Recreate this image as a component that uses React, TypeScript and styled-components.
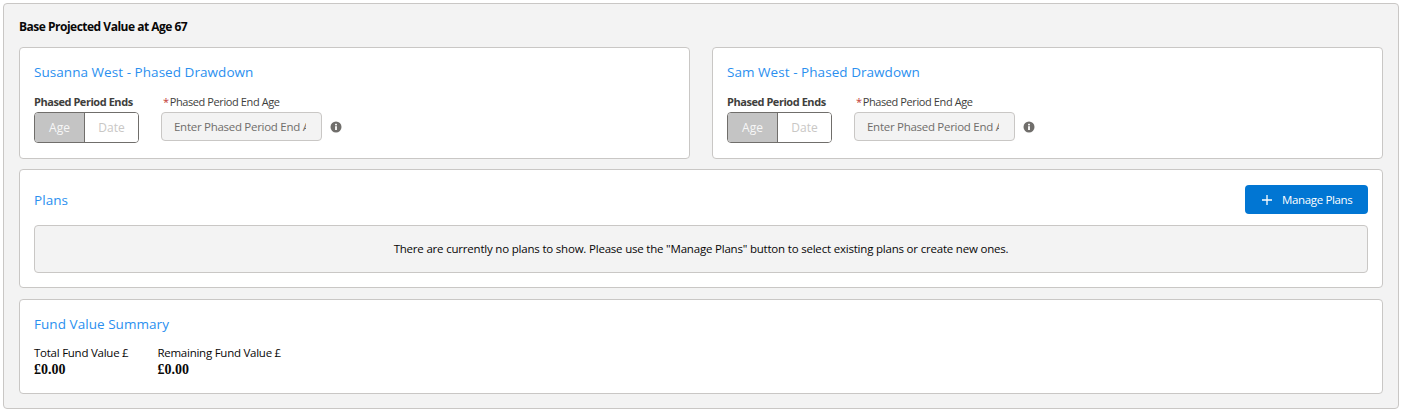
import React from 'react';
import styled, { createGlobalStyle } from 'styled-components';

const GlobalStyle = createGlobalStyle`
  html, body {
    margin: 0;
    padding: 0;
    background: #fff;
  }
  body {
    font-family: 'Open Sans', 'Noto Sans', sans-serif;
    font-size: 12px;
    color: #080707;
  }
`;

const Panel = styled.div`
  box-sizing: border-box;
  width: 1396px;
  height: 406px;
  margin: 3px 0 0 3px;
  padding: 14px 15px;
  background: #f3f3f3;
  border: 1px solid #c9c7c5;
  border-radius: 4px;
`;

const PanelTitle = styled.h2`
  margin: 0 0 11px;
  font-size: 12px;
  line-height: 18px;
  font-weight: 700;
  letter-spacing: -0.5px;
  color: #080707;
`;

const Columns = styled.div`
  display: grid;
  grid-template-columns: 671px 671px;
  gap: 22px;
  margin-bottom: 10px;
`;

const Card = styled.section<{ $height: number }>`
  box-sizing: border-box;
  height: ${(p) => p.$height}px;
  padding: 14px 14px 0;
  background: #fff;
  border: 1px solid #c9c7c5;
  border-radius: 4px;
`;

const Stack = styled.div`
  display: flex;
  flex-direction: column;
  gap: 11px;
`;

const CardTitle = styled.h3`
  margin: 0;
  font-size: 13.5px;
  line-height: 20px;
  font-weight: 400;
  letter-spacing: 0.05px;
  color: #2b8fef;
`;

const FieldRow = styled.div`
  display: flex;
  align-items: flex-start;
  margin-top: 11px;
`;

const ToggleField = styled.div`
  display: flex;
  flex-direction: column;
  width: 105px;
  margin-right: 22px;
`;

const BoldLabel = styled.span`
  font-size: 11px;
  line-height: 17px;
  padding-bottom: 2px;
  font-weight: 700;
  letter-spacing: -0.45px;
  color: #3e3e3c;
  white-space: nowrap;
`;

const Toggle = styled.div`
  display: flex;
  box-sizing: border-box;
  height: 31px;
  width: 105px;
  border: 1px solid #706e6b;
  border-radius: 4px;
  overflow: hidden;
`;

const ToggleOption = styled.div<{ $active?: boolean }>`
  display: flex;
  align-items: center;
  justify-content: center;
  box-sizing: border-box;
  width: ${(p) => (p.$active ? '50px' : '53px')};
  font-size: 12px;
  letter-spacing: 0;
  color: ${(p) => (p.$active ? '#f7f7f7' : '#c9c7c5')};
  background: ${(p) => (p.$active ? '#c4c4c4' : '#fff')};
  border-right: ${(p) => (p.$active ? '1px solid #706e6b' : 'none')};
`;

const InputField = styled.div`
  display: flex;
  flex-direction: column;
`;

const InputLabel = styled.label`
  font-size: 11px;
  line-height: 17px;
  padding-bottom: 2px;
  letter-spacing: -0.4px;
  color: #3e3e3c;
  padding-left: 2px;
  white-space: nowrap;
`;

const Required = styled.span`
  color: #c23934;
  margin-right: 1px;
`;

const InputRow = styled.div`
  display: flex;
  align-items: center;
  gap: 8px;
`;

const DisabledInput = styled.input`
  box-sizing: border-box;
  width: 161px;
  height: 29px;
  padding: 0 15px 0 12px;
  font-family: inherit;
  font-size: 11.5px;
  letter-spacing: -0.28px;
  background: #f3f3f3;
  border: 1px solid #c9c7c5;
  border-radius: 4px;
  &::placeholder {
    color: #706e6b;
    opacity: 1;
  }
`;

const InfoIcon = styled.svg`
  width: 12px;
  height: 12px;
  flex: none;
`;

const PlansHeader = styled.div`
  display: flex;
  align-items: flex-start;
  justify-content: space-between;
  height: 30px;
  padding-top: 1px;
  box-sizing: border-box;
  margin-bottom: 11px;
`;

const PlansTitle = styled(CardTitle)`
  padding-top: 5px;
`;

const ManageButton = styled.button`
  display: flex;
  align-items: center;
  gap: 9px;
  box-sizing: border-box;
  width: 123px;
  height: 29px;
  padding: 0 0 0 16px;
  font-family: inherit;
  font-size: 11.5px;
  letter-spacing: -0.35px;
  color: #fff;
  background: #0176d3;
  border: none;
  border-radius: 4px;
`;

const EmptyNotice = styled.div`
  box-sizing: border-box;
  height: 48px;
  padding-bottom: 1px;
  display: flex;
  align-items: center;
  justify-content: center;
  font-size: 11.5px;
  letter-spacing: -0.2px;
  background: #f3f3f3;
  border: 1px solid #c9c7c5;
  border-radius: 4px;
`;

const SummaryRow = styled.div`
  display: flex;
  gap: 29px;
  margin-top: 10px;
`;

const SummaryItem = styled.div`
  display: flex;
  flex-direction: column;
`;

const SummaryLabel = styled.span`
  font-size: 11.5px;
  line-height: 18px;
  letter-spacing: -0.25px;
  white-space: nowrap;
`;

const SummaryValue = styled.strong`
  font-family: 'Liberation Serif', serif;
  font-size: 14px;
  line-height: 16px;
  font-weight: 700;
`;

const Info = () => (
  <InfoIcon viewBox="0 0 12 12">
    <circle cx="6" cy="6" r="5.5" fill="#706e6b" />
    <rect x="5.1" y="5.2" width="1.8" height="3.8" fill="#fff" />
    <rect x="5.1" y="2.8" width="1.8" height="1.6" fill="#fff" />
  </InfoIcon>
);

const DrawdownCard = ({ name }: { name: string }) => (
  <Card $height={112}>
    <CardTitle>{name} - Phased Drawdown</CardTitle>
    <FieldRow>
      <ToggleField>
        <BoldLabel>Phased Period Ends</BoldLabel>
        <Toggle>
          <ToggleOption $active>Age</ToggleOption>
          <ToggleOption>Date</ToggleOption>
        </Toggle>
      </ToggleField>
      <InputField>
        <InputLabel>
          <Required>*</Required>Phased Period End Age
        </InputLabel>
        <InputRow>
          <DisabledInput disabled placeholder="Enter Phased Period End Age" />
          <Info />
        </InputRow>
      </InputField>
    </FieldRow>
  </Card>
);

const App: React.FC = () => (
  <>
    <GlobalStyle />
    <Panel>
      <PanelTitle>Base Projected Value at Age 67</PanelTitle>
      <Columns>
        <DrawdownCard name="Susanna West" />
        <DrawdownCard name="Sam West" />
      </Columns>
      <Stack>
        <Card $height={119}>
          <PlansHeader>
            <PlansTitle>Plans</PlansTitle>
            <ManageButton>
              <svg width="12" height="12" viewBox="0 0 12 12">
                <path d="M6 1v10M1 6h10" stroke="#fff" strokeWidth="1.3" fill="none" />
              </svg>
              Manage Plans
            </ManageButton>
          </PlansHeader>
          <EmptyNotice>
            There are currently no plans to show. Please use the "Manage Plans" button to select existing plans or create new ones.
          </EmptyNotice>
        </Card>
        <Card $height={95}>
          <CardTitle>Fund Value Summary</CardTitle>
          <SummaryRow>
            <SummaryItem>
              <SummaryLabel>Total Fund Value £</SummaryLabel>
              <SummaryValue>£0.00</SummaryValue>
            </SummaryItem>
            <SummaryItem>
              <SummaryLabel>Remaining Fund Value £</SummaryLabel>
              <SummaryValue>£0.00</SummaryValue>
            </SummaryItem>
          </SummaryRow>
        </Card>
      </Stack>
    </Panel>
  </>
);

export default App;
